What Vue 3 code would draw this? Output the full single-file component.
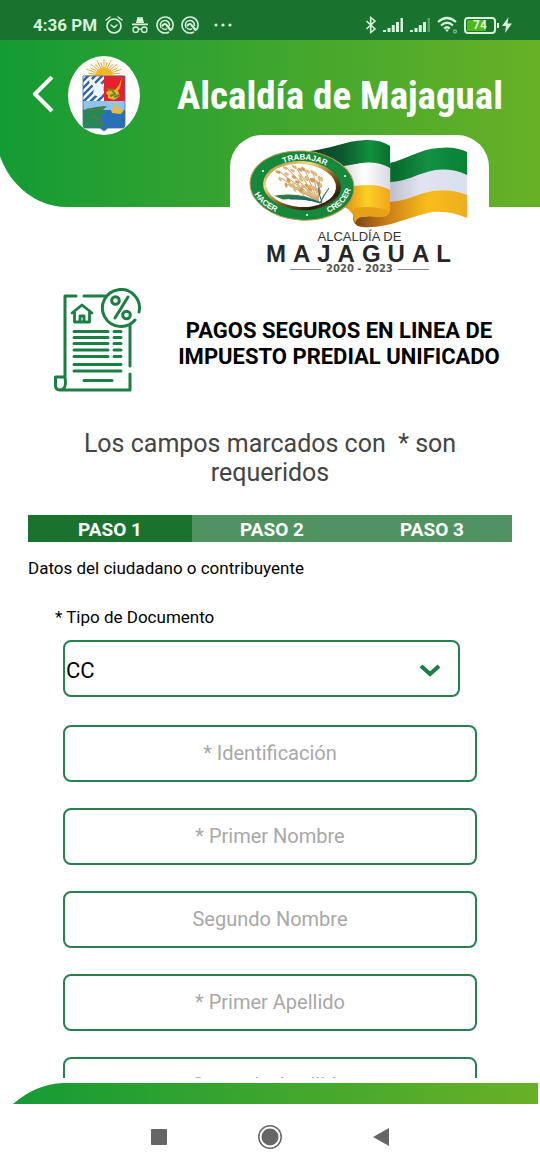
<script setup>
import { ref } from 'vue'

const steps = ['PASO 1', 'PASO 2', 'PASO 3']
const activeStep = ref(0)
const documentType = ref('CC')
const documentTypes = ['CC', 'CE', 'NIT', 'TI']

const fields = ref([
  { id: 'identificacion', label: '* Identificación', value: '' },
  { id: 'primer-nombre', label: '* Primer Nombre', value: '' },
  { id: 'segundo-nombre', label: 'Segundo Nombre', value: '' },
  { id: 'primer-apellido', label: '* Primer Apellido', value: '' },
  { id: 'segundo-apellido', label: 'Segundo Apellido', value: '' }
])

const rays = Array.from({ length: 21 }, (_, i) => {
  const a = Math.PI * (1.12 - (i * 1.24) / 20)
  const r = i % 2 ? 16 : 19
  return {
    x1: 36 + 9 * Math.cos(a),
    y1: 20 - 9 * Math.sin(a),
    x2: 36 + r * Math.cos(a),
    y2: 20 - (r - 2) * Math.sin(a)
  }
})

const stems = [
  { x: 279, y: 171 }, { x: 286, y: 167 }, { x: 295, y: 166 },
  { x: 304, y: 168 }, { x: 313, y: 171 }, { x: 281, y: 178 },
  { x: 287, y: 184 }, { x: 320, y: 177 }
]
const grains = stems.flatMap((s, i) =>
  [0, 1, 2, 3, 4, 5].map((k) => {
    const t = k / 7
    const cx = s.x + (317 - s.x) * t + (k % 2 ? 2 : -1)
    const cy = s.y + (199 - s.y) * t + (k % 2 ? -1 : 1)
    return { cx, cy, turn: `rotate(${25 + i * 8} ${cx} ${cy})`, dark: (i + k) % 3 === 0 }
  })
)
</script>

<template>
  <div class="screen">
    <div class="status">
      <div class="status-group">
        <span class="clock">4:36 PM</span>
        <svg width="20" height="20" viewBox="0 0 20 20" fill="none" stroke="#d6f3da" stroke-width="1.700" stroke-linecap="round">
          <circle cx="10" cy="11" r="7" />
          <path d="M2 5l4-3M18 5l-4-3M7 10l3 2.500 3-2.500" stroke-width="1.500" />
        </svg>
        <svg width="18" height="18" viewBox="0 0 18 18" fill="#d6f3da">
          <path d="M5 7l1.300-5.500Q6.600 .7 7.500 1l1.500.5 1.500-.5q.9-.3 1.200.5L13 7zM1 7.500h16v1.700H1z" />
          <path d="M7.500 13.500q1.500-1 3 0" fill="none" stroke="#d6f3da" stroke-width="1.300" />
          <circle cx="4.700" cy="13.700" r="2.700" fill="none" stroke="#d6f3da" stroke-width="1.300" />
          <circle cx="13.300" cy="13.700" r="2.700" fill="none" stroke="#d6f3da" stroke-width="1.300" />
        </svg>
        <svg v-for="n in 2" :key="n" width="18" height="18" viewBox="0 0 18 18" fill="none" stroke="#d6f3da" stroke-linecap="round">
          <path d="M12.500 16.200A8 8 0 1 1 15.500 13.700" stroke-width="1.600" />
          <path d="M5 11.500A4.600 4.600 0 1 1 13.500 9.500" stroke-width="1.500" />
          <path d="M6.500 9.500Q9 6.500 11 9.500L14.500 14" stroke-width="2.200" />
          <path d="M6.500 12.500q2 1.500 4 .5" stroke-width="1.500" />
        </svg>
        <svg class="dots" width="18" height="4" viewBox="0 0 18 4" fill="#d6f3da">
          <circle cx="2" cy="2" r="1.600" /><circle cx="9" cy="2" r="1.600" /><circle cx="16" cy="2" r="1.600" />
        </svg>
      </div>
      <div class="status-group right">
        <svg width="12" height="18" viewBox="0 0 12 18" fill="none" stroke="#d6f3da" stroke-width="1.600">
          <path d="M1.500 5l8.500 8-4.300 3.500V1.500L10 5l-8.500 8" />
        </svg>
        <svg v-for="n in 2" :key="n" width="21" height="16" viewBox="0 0 21 16" fill="#d6f3da">
          <path d="M0 13h3v2H0zM4.500 11h3v4h-3zM8.800 8h3v7h-3zM13 5h3v10h-3z" />
          <path d="M17.500 1h2.500v14h-2.500z" :fill-opacity="n === 1 ? 1 : 0.35" />
        </svg>
        <svg width="21" height="18" viewBox="0 0 21 18" fill="none" stroke="#d6f3da" stroke-width="2.200">
          <path d="M1 6q9-8 18 0M4 9.500q6-5.500 12 0M7 12.500q3-2.500 6 0" />
          <path d="M8 13.500h4L10 16z" fill="#d6f3da" stroke="none" />
          <circle cx="18" cy="15.500" r="1.500" stroke="#6fc384" stroke-width="1.300" />
        </svg>
        <span class="battery"><span class="charge">74</span></span>
        <svg width="10" height="16" viewBox="0 0 10 16" fill="#d6f3da"><path d="M6.500 0L0 9h4L3 16l7-9.500H5.500z" /></svg>
      </div>
    </div>

    <header class="header">
      <div class="title-row">
        <button class="back" type="button" aria-label="Volver">
          <svg width="22" height="40" viewBox="0 0 22 40" fill="none" stroke="#fff" stroke-width="4" stroke-linejoin="round">
            <path d="M20 1L3 18l17 17" />
          </svg>
        </button>
        <svg width="72" height="79" viewBox="0 0 72 79">
          <ellipse cx="36" cy="39.500" rx="36" ry="39.500" fill="#fff" />
          <g stroke="#e9a62b" stroke-width="1">
            <line v-for="(r, i) in rays" :key="i" :x1="r.x1" :y1="r.y1" :x2="r.x2" :y2="r.y2" />
          </g>
          <circle cx="36" cy="20" r="9" fill="#f8b52c" />
          <clipPath id="shield"><path d="M15 20h42v49q0 3-3 3H40l-4 3-4-3H18q-3 0-3-3z" /></clipPath>
          <g clip-path="url(#shield)">
            <path d="M15 20h21v25H15z" fill="#fff" />
            <path d="M13 27l10-10M13 34l17-17M13 41l24-24M13 48l25-25M20 48l18-18M27 48l11-11" stroke="#3267ad" stroke-width="2.500" />
            <path d="M22 21l6 7 5-1 3 5-3 9-8-2 1-8-5-5z" fill="#eef5fc" />
            <path d="M36 20h21v25H36z" fill="#e8202c" />
            <path d="M54 21l-2 11-5 6-8 1-1-3 5-3 4 1 4-5zM40 38l10-3 2 5-6 4-6-2z" fill="#efb32b" />
            <path d="M39 33l5 1 3 4-5 2M46 41l6-2" stroke="#668b2f" stroke-width="2" fill="none" />
            <path d="M15 45h42v11H15z" fill="#8dc3ed" />
            <path d="M15 54h42v22H15z" fill="#2871b8" />
            <path d="M15 54l13-3 11-1-4 4 3 3-7 3 4 3-5 2 6 5-7 4H15z" fill="#258855" />
            <path d="M19 53l12 1 5-3M24 60l8 3 3 6" stroke="#68763c" stroke-width="1.500" fill="none" />
            <path d="M43 54l4-5 5 4 4 1-3 4-9-1zM46 50l1-4 3 6" fill="#e8b947" />
          </g>
          <path d="M15 20h42v49q0 3-3 3H40l-4 3-4-3H18q-3 0-3-3z" fill="none" stroke="#45678f" stroke-width=".8" />
        </svg>
        <h1>Alcaldía de Majagual</h1>
      </div>

      <div class="brand">
        <svg class="emblem" viewBox="230 135 259 95" role="img" aria-label="Trabajar, hacer, crecer">
          <defs>
            <linearGradient id="greenFold" x1="0" x2="1">
              <stop offset="0" stop-color="#0b4324" /><stop offset=".4" stop-color="#0b5730" /><stop offset=".75" stop-color="#12913c" /><stop offset="1" stop-color="#086f31" />
            </linearGradient>
            <linearGradient id="greenWave" x1="0" x2="1">
              <stop offset="0" stop-color="#07652c" /><stop offset=".5" stop-color="#139044" /><stop offset="1" stop-color="#078234" />
            </linearGradient>
            <linearGradient id="whiteFold" x1="0" x2="1">
              <stop offset="0" stop-color="#cfcfd4" /><stop offset=".5" stop-color="#fff" /><stop offset="1" stop-color="#d9dae0" />
            </linearGradient>
            <linearGradient id="whiteWave" x1="0" x2="1">
              <stop offset="0" stop-color="#bcc0ce" /><stop offset=".4" stop-color="#e1e4f1" /><stop offset="1" stop-color="#d9dfec" />
            </linearGradient>
            <linearGradient id="yellowFold" x1="0" x2="1">
              <stop offset="0" stop-color="#d98b12" /><stop offset=".5" stop-color="#ffcf25" /><stop offset="1" stop-color="#f0a51c" />
            </linearGradient>
            <linearGradient id="yellowWave" x1="0" x2="1">
              <stop offset="0" stop-color="#764217" /><stop offset=".3" stop-color="#ca7d17" /><stop offset=".65" stop-color="#f9bc1c" /><stop offset="1" stop-color="#efad20" />
            </linearGradient>
            <linearGradient id="gold" x1="0" x2="1" y2="1">
              <stop offset="0" stop-color="#8d6726" /><stop offset=".3" stop-color="#f4dc82" /><stop offset=".55" stop-color="#8b6421" /><stop offset=".8" stop-color="#281d0b" /><stop offset="1" stop-color="#d7ad48" />
            </linearGradient>
          </defs>
          <path d="M390 163C407 159 420 149 438 148Q455 146 467 152V176Q452 169 435 171C418 174 406 183 390 183z" fill="url(#greenWave)" />
          <path d="M390 182C406 182 418 173 435 170Q452 168 467 175V196Q450 188 432 191C417 194 406 202 390 203z" fill="url(#whiteWave)" />
          <path d="M353 215Q376 221 390 202C406 201 417 194 432 191Q450 188 467 195V218Q449 210 432 212C408 217 387 229 362 227Q352 226 353 215z" fill="url(#yellowWave)" />
          <path d="M310 151C330 149 345 141 365 140Q380 139 390 146V170Q377 161 362 163L338 168z" fill="url(#greenFold)" />
          <path d="M338 167L362 163Q377 161 390 168V191Q376 184 350 187z" fill="url(#whiteFold)" />
          <path d="M348 187Q376 182 390 190V211Q387 219 378 216Q365 213 352 214Q349 208 343 207z" fill="url(#yellowFold)" />
          <path d="M354 208Q374 205 389 211Q386 218 375 217Q357 214 355 223Q351 214 354 208z" fill="#e6a119" />
          <g transform="rotate(4 302 185)">
            <ellipse cx="302" cy="185.500" rx="52" ry="34.500" fill="#16883b" stroke="#bc9950" stroke-width="1" />
            <ellipse cx="302" cy="185.500" rx="39" ry="24.500" fill="url(#gold)" />
            <ellipse cx="301" cy="185.500" rx="35" ry="21.500" fill="#fff" />
          </g>
          <g fill="none" stroke="#d3a667" stroke-width="1">
            <path v-for="(s, i) in stems" :key="i" :d="`M${s.x} ${s.y}L318 201`" />
          </g>
          <ellipse v-for="(g, i) in grains" :key="i" :cx="g.cx" :cy="g.cy" rx="2.600" ry="1.300" :transform="g.turn" :fill="g.dark ? '#cf9a5c' : '#dfb87b'" />
          <path d="M276 196Q301 192 320 203Q301 197 283 199zM320 203Q324 194 329 188" fill="#287944" stroke="#287944" stroke-width="1" />
          <path d="M290 199Q307 198 322 203M322 202Q318 193 319 187" fill="none" stroke="#256080" stroke-width="1" />
          <path id="arcTop" d="M264 177Q300 142 343 177" fill="none" />
          <path id="arcLeft" d="M252 189Q258 206 281 214" fill="none" />
          <path id="arcRight" d="M324 214Q347 207 352 185" fill="none" />
          <text class="ring" text-anchor="middle"><textPath href="#arcTop" startOffset="52%">TRABAJAR</textPath></text>
          <text class="ring" text-anchor="middle"><textPath href="#arcLeft" startOffset="50%">HACER</textPath></text>
          <text class="ring" text-anchor="middle"><textPath href="#arcRight" startOffset="50%">CRECER</textPath></text>
          <g fill="#fff"><circle cx="263" cy="171" r="1" /><circle cx="345" cy="176" r="1" /><circle cx="307" cy="215" r="1" /></g>
        </svg>
        <div class="brand-small">ALCALDÍA DE</div>
        <div class="brand-name">MAJAGUAL</div>
        <div class="brand-years">2020 - 2023</div>
      </div>
    </header>

    <section class="hero">
      <svg width="88" height="104" viewBox="54 288 88 104" fill="none" stroke="#1b7e43" stroke-width="3" stroke-linecap="round" stroke-linejoin="round">
        <path d="M76 296H65V377M84 296H105M65 377Q67 390 60 390Q55 390 55.500 384V377H65M60 390H130V374M130 366V325" />
        <path d="M139 312A18.500 18.500 0 1 0 135 320" />
        <path d="M128 297L115 318" />
        <circle cx="115.500" cy="300.500" r="3.800" /><circle cx="126.500" cy="315" r="3.800" />
        <path d="M72 313L82 305L92 313M74.500 312V322H89.500V312M80 322V316H84V322" stroke-width="2.800" />
        <path d="M74 331.500H108M114 331.500H121M74 337.500H108M114 337.500H121M74 343.500H108M114 343.500H121M74 350H108M114 350H121M74 356.500H108M114 356.500H121M74 364.500H121M74 371H121M84 380.500H112" stroke-width="3" />
      </svg>
      <h2>PAGOS SEGUROS EN LINEA DE IMPUESTO PREDIAL UNIFICADO</h2>
    </section>

    <p class="note">Los campos marcados con&nbsp; * son requeridos</p>

    <nav class="steps">
      <button v-for="(s, i) in steps" :key="s" type="button" :class="{ active: i === activeStep }" @click="activeStep = i">{{ s }}</button>
    </nav>
    <p class="section">Datos del ciudadano o contribuyente</p>

    <form class="form" @submit.prevent>
      <label class="type-label" for="tipo-documento">* Tipo de Documento</label>
      <div class="select-box">
        <select id="tipo-documento" v-model="documentType">
          <option v-for="d in documentTypes" :key="d">{{ d }}</option>
        </select>
        <svg width="22" height="14" viewBox="0 0 22 14" fill="none" stroke="#1b7e43" stroke-width="4"><path d="M2 2l9 8 9-8" /></svg>
      </div>
      <input v-for="f in fields" :id="f.id" :key="f.id" v-model="f.value" type="text" :placeholder="f.label" :aria-label="f.label" />
    </form>

    <div class="footer-bar">
      <svg viewBox="0 0 50 21" width="50" height="21"><path d="M0 0H50Q23 1 0 21z" fill="#fff" /></svg>
    </div>
    <div class="system-nav">
      <button type="button" aria-label="Recientes"><svg width="24" height="24" viewBox="0 0 24 24"><rect x="4" y="4" width="16" height="16" rx="1" fill="#666" /></svg></button>
      <button type="button" aria-label="Inicio"><svg width="24" height="24" viewBox="0 0 24 24"><circle cx="12" cy="12" r="11.200" fill="none" stroke="#666" stroke-width="1.500" /><circle cx="12" cy="12" r="8.500" fill="#666" /></svg></button>
      <button type="button" aria-label="Atrás"><svg width="24" height="24" viewBox="0 0 24 24"><path d="M4 12L20 3v18z" fill="#666" /></svg></button>
    </div>
  </div>
</template>

<style>
body {
  margin: 0;
  background: #fff;
}
</style>

<style scoped>
.screen {
  height: 100vh;
  display: flex;
  flex-direction: column;
  overflow: hidden;
  background: #fff;
  color: #000;
  font-family: Roboto, "Liberation Sans", sans-serif;
}
.screen > * {
  flex-shrink: 0;
}
button {
  padding: 0;
  border: 0;
  background: none;
  color: inherit;
  font: inherit;
}
svg {
  display: block;
}
.status {
  height: 30px;
  padding: 10px 28px 0 33px;
  display: flex;
  justify-content: space-between;
  background: #19722e;
  color: #d6f3da;
}
.status-group {
  display: flex;
  align-items: center;
  gap: 7px;
}
.status-group.right {
  gap: 6px;
}
.clock {
  font-size: 17px;
  font-weight: 700;
}
.dots {
  margin-left: 8px;
}
.battery {
  position: relative;
  width: 26px;
  height: 11px;
  padding: 1px;
  border: 2px solid #d6f3da;
  border-radius: 4px;
  background: linear-gradient(90deg, #4fb815 72%, #19722e 72%) content-box;
  display: flex;
  align-items: center;
  justify-content: center;
}
.battery::after {
  content: "";
  position: absolute;
  right: -5px;
  width: 2px;
  height: 5px;
  background: #d6f3da;
}
.charge {
  font-size: 12px;
  line-height: 12px;
  font-weight: 700;
}
.header {
  position: relative;
}
.header::before {
  content: "";
  position: absolute;
  top: 0;
  right: 0;
  left: -5px;
  height: 167px;
  border-bottom-left-radius: 72px 80px;
  background: linear-gradient(90deg, #129b35, #68b126);
}
.title-row {
  position: relative;
  display: flex;
  align-items: center;
  padding: 16px 37px 0 32px;
}
.back {
  margin-right: 14px;
}
h1 {
  flex: 1;
  margin: 0;
  color: #fff;
  text-align: right;
  font-family: "Roboto Condensed", "Liberation Sans Narrow", Roboto, sans-serif;
  font-size: 39px;
  line-height: 48px;
  font-weight: 700;
  white-space: nowrap;
}
.brand {
  position: relative;
  width: 48%;
  margin-left: auto;
  margin-right: 51px;
  padding-bottom: 6px;
  border-radius: 32px 32px 0 0;
  background: #fff;
  text-align: center;
}
.emblem {
  width: 100%;
}
.ring {
  fill: #fff;
  font: 700 8px "Liberation Sans", sans-serif;
}
.brand-small {
  font: 13px/14px "Liberation Sans", sans-serif;
  color: #333;
}
.brand-name {
  padding-left: 5px;
  font: 700 24px/20px "Liberation Sans", sans-serif;
  letter-spacing: 7px;
  color: #262626;
}
.brand-years {
  display: flex;
  align-items: center;
  justify-content: center;
  gap: 5px;
  font: 700 10px/10px "DejaVu Sans", sans-serif;
  color: #555;
}
.brand-years::before,
.brand-years::after {
  content: "";
  width: 31px;
  height: 1px;
  background: #888;
}
.hero {
  display: flex;
  align-items: center;
  gap: 28px;
  padding: 8px 32px 0 54px;
}
h2 {
  flex: 1;
  margin: 8px 0 0;
  text-align: center;
  font-size: 22px;
  line-height: 26px;
  font-weight: 700;
}
.note {
  margin: 37px 64px 0;
  text-align: center;
  color: #444;
  font-size: 25px;
  line-height: 29px;
}
.steps {
  display: flex;
  margin: 28px 28px 0;
}
.steps button {
  flex: 1;
  height: 27px;
  padding-top: 2px;
  background: #509360;
  color: #fff;
  font-size: 19px;
  line-height: 25px;
  font-weight: 700;
}
.steps button.active {
  flex-basis: 4px;
  background: #19722e;
}
.section {
  margin: 16px 28px 0;
  font-size: 17px;
  line-height: 20px;
}
.form {
  flex: 1 1 0;
  min-height: 0;
  display: flex;
  flex-direction: column;
  gap: 26px;
  margin: 0 0 5px;
  padding: 29px 63px 0;
  overflow-y: auto;
  scrollbar-width: none;
}
.form > * {
  flex-shrink: 0;
}
.type-label {
  margin: 0 0 -13px -8px;
  font-size: 17px;
  line-height: 20px;
}
.select-box {
  position: relative;
  margin: 0 17px 2px 0;
}
.select-box svg {
  position: absolute;
  right: 19px;
  top: 24px;
  pointer-events: none;
}
select,
input {
  box-sizing: border-box;
  display: block;
  width: 100%;
  height: 57px;
  border: 2px solid #28804f;
  border-radius: 8px;
  background: #fff;
  color: #000;
  font-family: inherit;
}
select {
  appearance: none;
  padding: 3px 1px 0;
  font-size: 22px;
}
input {
  padding: 0 8px 2px;
  text-align: center;
  font-size: 20px;
}
input::placeholder {
  color: #a8a8a8;
  opacity: 1;
}
.footer-bar {
  height: 21px;
  margin-right: 2px;
  padding-left: 13px;
  background: linear-gradient(#fff, #fff) 0 0 / 13px 100% no-repeat, linear-gradient(90deg, #129b35, #68b126);
}
.system-nav {
  height: 66px;
  display: flex;
  align-items: center;
  justify-content: center;
  gap: 87px;
}
.system-nav button {
  width: 24px;
  height: 24px;
}
</style>
